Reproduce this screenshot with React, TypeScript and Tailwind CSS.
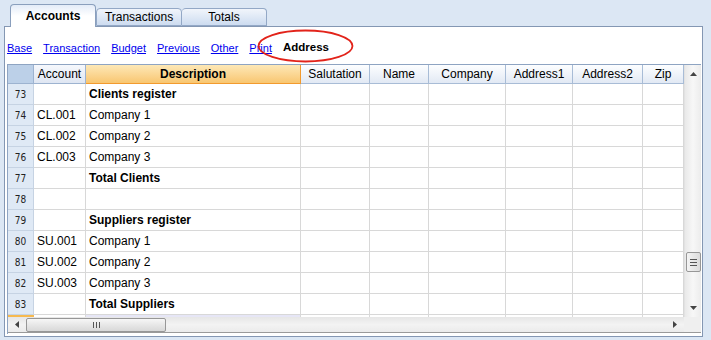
import React from "react";

const cols = "grid-cols-[26px_52px_215px_69px_59px_77px_67px_70px_41px]";

const rows: { n: number; acc: string; desc: string; bold?: boolean }[] = [
  { n: 73, acc: "", desc: "Clients register", bold: true },
  { n: 74, acc: "CL.001", desc: "Company 1" },
  { n: 75, acc: "CL.002", desc: "Company 2" },
  { n: 76, acc: "CL.003", desc: "Company 3" },
  { n: 77, acc: "", desc: "Total Clients", bold: true },
  { n: 78, acc: "", desc: "" },
  { n: 79, acc: "", desc: "Suppliers register", bold: true },
  { n: 80, acc: "SU.001", desc: "Company 1" },
  { n: 81, acc: "SU.002", desc: "Company 2" },
  { n: 82, acc: "SU.003", desc: "Company 3" },
  { n: 83, acc: "", desc: "Total Suppliers", bold: true },
];

const links = ["Base", "Transaction", "Budget", "Previous", "Other", "Print"];
const headers = ["Salutation", "Name", "Company", "Address1", "Address2", "Zip"];

function Cell({ children, className = "" }: { children?: React.ReactNode; className?: string }) {
  return (
    <div className={`h-[21px] border-r border-b border-[#d8d8d8] flex items-center px-[3px] overflow-hidden whitespace-nowrap ${className}`}>
      {children}
    </div>
  );
}

function Grip({ vertical }: { vertical?: boolean }) {
  return vertical ? (
    <div className="flex flex-col gap-[2px]">
      <div className="w-[7px] h-px bg-[#555]" />
      <div className="w-[7px] h-px bg-[#555]" />
      <div className="w-[7px] h-px bg-[#555]" />
    </div>
  ) : (
    <div className="flex gap-[2px]">
      <div className="w-px h-[6px] bg-[#555]" />
      <div className="w-px h-[6px] bg-[#555]" />
      <div className="w-px h-[6px] bg-[#555]" />
    </div>
  );
}

export default function App() {
  return (
    <div className="relative w-[711px] h-[340px] bg-[#dce7f4] overflow-hidden text-black" style={{ fontFamily: '"Liberation Sans", Arial, sans-serif' }}>
      {/* Tabs */}
      <div className="h-[26px] flex items-end pl-[10px]">
        <div className="relative z-10 -mb-px w-[86px] h-[23px] rounded-t-[4px] border border-b-0 border-[#8a9fbd] bg-gradient-to-b from-[#e4ecf8] via-white to-white flex items-center justify-center text-[12px] font-bold">
          Accounts
        </div>
        <div className="w-[86px] h-[18px] rounded-t-[4px] border border-[#93a8c6] bg-gradient-to-b from-[#f1f5fb] to-[#cddcf0] flex items-center justify-center text-[12px]">
          Transactions
        </div>
        <div className="w-[85px] h-[18px] rounded-t-[4px] border border-l-0 border-[#93a8c6] bg-gradient-to-b from-[#f1f5fb] to-[#cddcf0] flex items-center justify-center text-[12px]">
          Totals
        </div>
      </div>

      {/* Panel */}
      <div className="ml-[4px] w-[699px] h-[311px] border border-[#8497b3] bg-white flex flex-col">
        <div className="h-[37px] pt-[5px] pl-[2px] flex items-center gap-[11px] text-[11px]">
          {links.map((l) => (
            <span key={l} className="text-[#0000ee] underline">
              {l}
            </span>
          ))}
          <span className="font-bold text-[11.5px]">Address</span>
        </div>

        <div className="ml-[2px] w-[694px] flex flex-col border-l border-t border-[#8ea4c2]">
          <div className="flex">
            <div className="w-[676px] h-[252px] overflow-hidden">
              {/* Header */}
              <div className={`grid ${cols} h-[19px] text-[12px]`}>
                <div className="bg-[#bcd0e8] border-r border-b border-[#9db3d0]" />
                <div className="bg-gradient-to-b from-[#f6f8fc] to-[#dfe6f2] border-r border-b border-[#9db3d0] flex items-center justify-center">
                  Account
                </div>
                <div className="bg-gradient-to-b from-[#fde8b6] to-[#f8c670] border-r border-b border-[#f29a2e] flex items-center justify-center font-bold">
                  Description
                </div>
                {headers.map((h) => (
                  <div key={h} className="bg-gradient-to-b from-[#fdfeff] to-[#e2e9f4] border-r border-b border-[#a8bcd6] flex items-center justify-center">
                    {h}
                  </div>
                ))}
              </div>
              {/* Rows */}
              {rows.map((r) => (
                <div key={r.n} className={`grid ${cols} text-[12px]`}>
                  <div
                    className="h-[21px] bg-[#dfe9f5] border-r border-b border-[#c6d3e3] flex items-center justify-center text-[10px] text-[#222]"
                    style={{ fontFamily: '"DejaVu Sans Condensed", "DejaVu Sans", sans-serif' }}
                  >
                    {r.n}
                  </div>
                  <Cell>{r.acc}</Cell>
                  <Cell className={r.bold ? "font-bold" : ""}>{r.desc}</Cell>
                  {headers.map((h) => (
                    <Cell key={h} />
                  ))}
                </div>
              ))}
              <div className={`grid ${cols}`}>
                <div className="h-[21px] bg-[#dfe9f5] border-t-[3px] border-[#f6b94f]" />
                <div className="h-[21px] border-r border-[#d8d8d8]" />
                <div className="h-[21px] bg-[#e6e6f6] border-r border-[#d8d8d8]" />
                {headers.map((h) => (
                  <div key={h} className="h-[21px] border-r border-[#d8d8d8]" />
                ))}
              </div>
            </div>

            {/* Vertical scrollbar */}
            <div className="w-[17px] h-[252px] bg-gradient-to-r from-[#e9e9e9] via-[#f7f7f7] to-[#ececec] border-l border-[#e2e2e2] flex flex-col items-center">
              <div className="h-[17px] flex items-center justify-center">
                <svg width="7" height="4" viewBox="0 0 7 4">
                  <path d="M0 4 L3.5 0 L7 4 Z" fill="#444" />
                </svg>
              </div>
              <div className="flex-1" />
              <div className="w-[15px] h-[20px] rounded-[2px] border border-[#979797] bg-gradient-to-r from-[#f4f4f4] to-[#dcdcdc] flex items-center justify-center">
                <Grip vertical />
              </div>
              <div className="h-[45px] flex flex-col justify-end pb-[7px]">
                <svg width="7" height="4" viewBox="0 0 7 4">
                  <path d="M0 0 L7 0 L3.5 4 Z" fill="#444" />
                </svg>
              </div>
            </div>
          </div>

          {/* Horizontal scrollbar */}
          <div className="flex h-[15px]">
            <div className="w-[676px] bg-gradient-to-b from-[#e6e6e6] via-[#f3f3f3] to-[#ebebeb] flex items-center">
              <div className="w-[18px] flex items-center justify-center">
                <svg width="4" height="7" viewBox="0 0 4 7">
                  <path d="M4 0 L0 3.5 L4 7 Z" fill="#444" />
                </svg>
              </div>
              <div className="w-[140px] h-[14px] rounded-[2px] border border-[#979797] bg-gradient-to-b from-[#f6f6f6] to-[#d8d8d8] flex items-center justify-center">
                <Grip />
              </div>
              <div className="flex-1" />
              <div className="w-[18px] flex items-center justify-center">
                <svg width="4" height="7" viewBox="0 0 4 7">
                  <path d="M0 0 L4 3.5 L0 7 Z" fill="#444" />
                </svg>
              </div>
            </div>
            <div className="w-[17px] bg-[#efefef]" />
          </div>
          <div className="h-[2px] border-t border-[#9a9a9a]" />
        </div>
      </div>

      {/* Red highlight ellipse */}
      <svg className="absolute left-0 top-0 pointer-events-none" width="711" height="340">
        <ellipse cx="305.5" cy="46" rx="47" ry="15.5" fill="none" stroke="#e2231a" strokeWidth="1.8" />
      </svg>
    </div>
  );
}
